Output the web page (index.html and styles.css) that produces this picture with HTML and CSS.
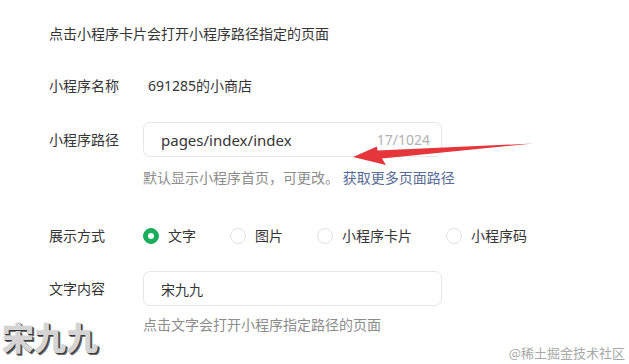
FILE: index.html
```html
<!DOCTYPE html>
<html lang="zh-CN">
<head>
<meta charset="utf-8">
<title>小程序卡片</title>
<link rel="stylesheet" href="styles.css">
</head>
<body>
<div class="page">
  <div class="form">
    <p class="tip">点击小程序卡片会打开小程序路径指定的页面</p>
    <div class="row row-name">
      <span class="label">小程序名称</span>
      <span class="value">691285的小商店</span>
    </div>
    <div class="row row-path">
      <span class="label label-input">小程序路径</span>
      <div class="control">
        <div class="input input-path">
          <span class="input-text">pages/index/index</span>
          <span class="count">17/1024</span>
        </div>
        <div class="help help-path">默认显示小程序首页，可更改。 <a class="link">获取更多页面路径</a></div>
      </div>
    </div>
    <div class="row row-mode">
      <span class="label">展示方式</span>
      <div class="radios">
        <span class="radio checked"><span class="dot"></span>文字</span>
        <span class="radio"><span class="dot"></span>图片</span>
        <span class="radio"><span class="dot"></span>小程序卡片</span>
        <span class="radio"><span class="dot"></span>小程序码</span>
      </div>
    </div>
    <div class="row row-text">
      <span class="label label-input">文字内容</span>
      <div class="control">
        <div class="input input-text-box">
          <span class="input-text">宋九九</span>
        </div>
        <div class="help help-text">点击文字会打开小程序指定路径的页面</div>
      </div>
    </div>
  </div>
  <svg class="arrow" width="629" height="364" viewBox="0 0 629 364">
    <polygon points="353,157 377,146.5 377.5,150.5 533,143.5 382,158.5 386,165" fill="#e5363b"/>
  </svg>
  <div class="mark-left">宋九九</div>
  <div class="mark-right">@稀土掘金技术社区</div>
</div>
</body>
</html>
```
FILE: styles.css
```css
html, body {
  margin: 0;
  padding: 0;
  background: #ffffff;
}

body {
  font-family: "Noto Sans", "Noto Sans CJK SC", sans-serif;
  color: #353535;
  font-size: 14px;
}

.page {
  position: relative;
  width: 629px;
  height: 364px;
  overflow: hidden;
}

.form {
  padding: 24px 0 0 49px;
}

.tip {
  margin: 0;
  line-height: 20px;
  font-size: 14px;
  color: #353535;
}

.row {
  display: flex;
  align-items: flex-start;
}

.label {
  width: 94px;
  flex: none;
  line-height: 20px;
  color: #353535;
}

.label-input {
  line-height: 35px;
}

.row-name {
  margin-top: 32px;
  line-height: 20px;
}

.value {
  padding-left: 5px;
  line-height: 20px;
  color: #353535;
}

.row-path {
  margin-top: 26px;
}

.control {
  display: flex;
  flex-direction: column;
}

.input {
  box-sizing: border-box;
  width: 299px;
  height: 35px;
  border: 1px solid #e6e6e6;
  border-radius: 7px;
  display: flex;
  align-items: center;
  justify-content: space-between;
  padding: 0 11px 0 17px;
}

.input-text {
  font-size: 15px;
  color: #353535;
}

.count {
  font-size: 14px;
  color: #b2b2b2;
}

.help {
  line-height: 20px;
  font-size: 14px;
  color: #8c8c8c;
}

.help-path {
  margin-top: 11px;
}

.link {
  color: #576b95;
  text-decoration: none;
}

.row-mode {
  margin-top: 38px;
}

.radios {
  display: flex;
  align-items: center;
}

.radio {
  display: flex;
  align-items: center;
  line-height: 20px;
  margin-right: 34px;
  color: #353535;
}

.dot {
  box-sizing: border-box;
  width: 16px;
  height: 16px;
  border-radius: 50%;
  border: 1px solid #e2e2e2;
  margin-right: 9px;
  position: relative;
}

.radio.checked .dot {
  background: #1aad5d;
  border-color: #1aad5d;
}

.radio.checked .dot::after {
  content: "";
  position: absolute;
  left: 4px;
  top: 4px;
  width: 6px;
  height: 6px;
  border-radius: 50%;
  background: #ffffff;
}

.row-text {
  margin-top: 25px;
}

.input-text-box .input-text {
  font-size: 14px;
}

.help-text {
  margin-top: 9px;
}

.arrow {
  position: absolute;
  left: 0;
  top: 0;
  pointer-events: none;
}

.mark-left {
  position: absolute;
  left: 2px;
  top: 316px;
  font-size: 32px;
  font-weight: 900;
  line-height: 40px;
  color: #d4d4d4;
  text-shadow: 1px 1px 0 #3a3a3a, 2px 2px 0 #6a6a6a;
  font-family: "Noto Sans CJK SC", sans-serif;
}

.mark-right {
  position: absolute;
  right: 4px;
  top: 343px;
  font-size: 13px;
  line-height: 20px;
  color: #a8a8a8;
  font-family: "Noto Sans CJK SC", sans-serif;
}
```
